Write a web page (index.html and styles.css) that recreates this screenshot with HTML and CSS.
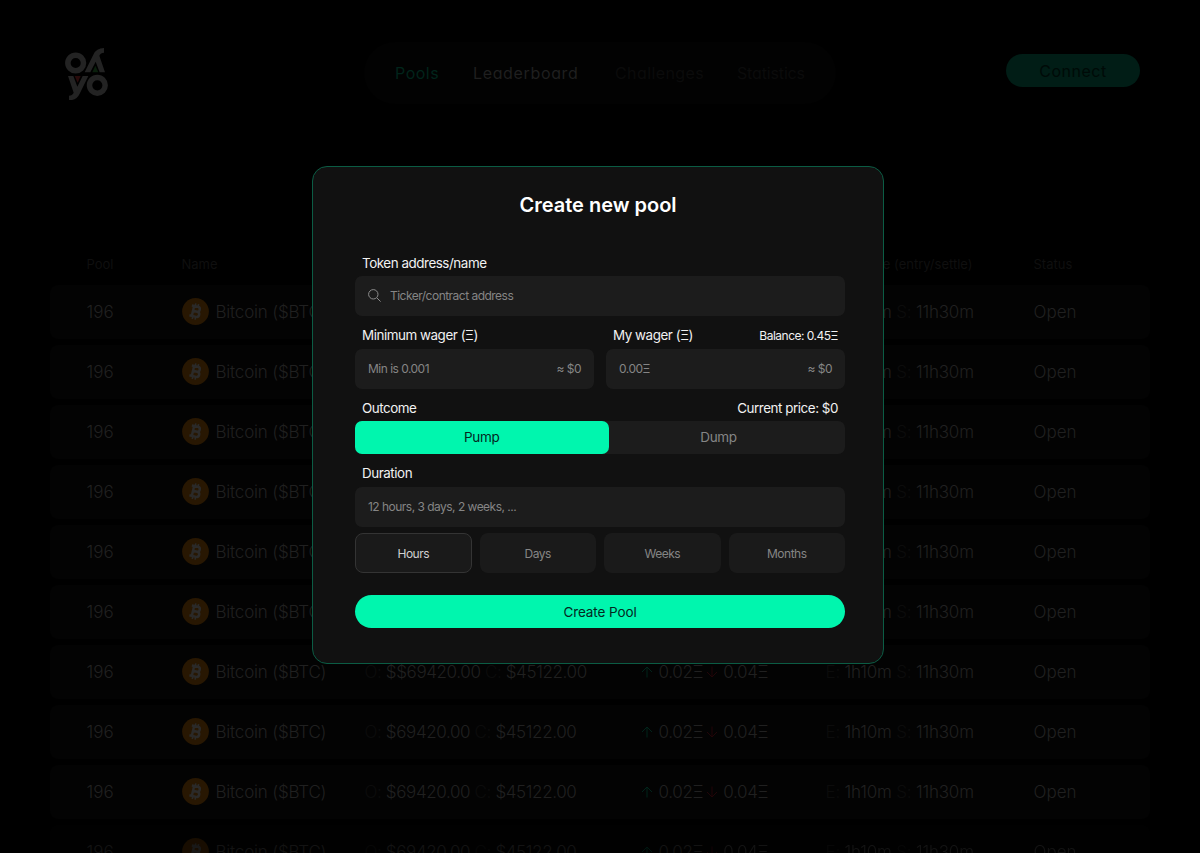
FILE: index.html
```html
<!DOCTYPE html>
<html lang="en">
<head>
<meta charset="utf-8">
<title>Pools</title>
<link rel="stylesheet" href="styles.css">
</head>
<body>
<svg class="defs" width="0" height="0" aria-hidden="true">
  <symbol id="btc" viewBox="0 0 27 27">
    <circle cx="13.5" cy="13.5" r="13.4" fill="#281702"/>
    <g transform="rotate(13 13.5 13.5)" fill="none" stroke="#2b2a29" stroke-width="2.5">
      <path d="M8.6 8.4h6.2a2.4 2.4 0 0 1 0 4.9h-3.4M10.9 13.4h4.3a2.6 2.6 0 0 1 0 5.2H8.4M10.9 8.4v10.2"/>
      <path stroke-width="1.6" d="M12 5.5v3M14.9 5.5v3M12 18.5v3M14.9 18.5v3"/>
    </g>
  </symbol>
  <symbol id="up" viewBox="0 0 12 12"><path d="M6 11.5V1M1 6l5-5 5 5" fill="none" stroke="#01241b"/></symbol>
  <symbol id="down" viewBox="0 0 12 12"><path d="M6 .5V11M1 6l5 5 5-5" fill="none" stroke="#220508"/></symbol>
</svg>
<div class="page">
  <header class="header">
    <svg class="logo" viewBox="75 53 129 157" aria-label="oyyo">
      <defs>
        <g id="half">
          <circle cx="107" cy="98" r="23.5" fill="none" stroke="#232323" stroke-width="16.5"/>
          <path d="M134 126L160 73Q169 53 192 53V67Q182 67 178 76L195 126H179L167 94L151 126Z" fill="#232323"/>
        </g>
      </defs>
      <use href="#half"/>
      <use href="#half" transform="rotate(180 139.5 131.5)"/>
      <path d="M166 106l9 20h-18z" fill="#0a1f0c"/>
      <path d="M113 157l-9-20h18z" fill="#290b0b"/>
    </svg>
    <nav class="nav">
      <a class="nav-item active">Pools</a>
      <a class="nav-item lead">Leaderboard</a>
      <a class="nav-item off chal">Challenges</a>
      <a class="nav-item off stat">Statistics</a>
    </nav>
    <button class="connect">Connect</button>
  </header>

  <main class="table">
    <div class="cols head"><span>Pool</span><span>Name</span><span>Price</span><span>Wager</span><span>Close time (entry/settle)</span><span>Status</span></div>
    <div class="cols row"><span>196</span><span class="name"><svg class="coin"><use href="#btc"/></svg>Bitcoin ($BTC)</span><span class="price"><i>O:</i> $69420.00 <i>C:</i> $45122.00</span><span class="wager"><svg class="arrow"><use href="#up"/></svg>0.02Ξ<svg class="arrow dn"><use href="#down"/></svg>0.04Ξ</span><span class="time"><i>E:</i> 1h10m <i>S:</i> 11h30m</span><span>Open</span></div>
    <div class="cols row"><span>196</span><span class="name"><svg class="coin"><use href="#btc"/></svg>Bitcoin ($BTC)</span><span class="price"><i>O:</i> $69420.00 <i>C:</i> $45122.00</span><span class="wager"><svg class="arrow"><use href="#up"/></svg>0.02Ξ<svg class="arrow dn"><use href="#down"/></svg>0.04Ξ</span><span class="time"><i>E:</i> 1h10m <i>S:</i> 11h30m</span><span>Open</span></div>
    <div class="cols row"><span>196</span><span class="name"><svg class="coin"><use href="#btc"/></svg>Bitcoin ($BTC)</span><span class="price"><i>O:</i> $69420.00 <i>C:</i> $45122.00</span><span class="wager"><svg class="arrow"><use href="#up"/></svg>0.02Ξ<svg class="arrow dn"><use href="#down"/></svg>0.04Ξ</span><span class="time"><i>E:</i> 1h10m <i>S:</i> 11h30m</span><span>Open</span></div>
    <div class="cols row"><span>196</span><span class="name"><svg class="coin"><use href="#btc"/></svg>Bitcoin ($BTC)</span><span class="price"><i>O:</i> $69420.00 <i>C:</i> $45122.00</span><span class="wager"><svg class="arrow"><use href="#up"/></svg>0.02Ξ<svg class="arrow dn"><use href="#down"/></svg>0.04Ξ</span><span class="time"><i>E:</i> 1h10m <i>S:</i> 11h30m</span><span>Open</span></div>
    <div class="cols row"><span>196</span><span class="name"><svg class="coin"><use href="#btc"/></svg>Bitcoin ($BTC)</span><span class="price"><i>O:</i> $69420.00 <i>C:</i> $45122.00</span><span class="wager"><svg class="arrow"><use href="#up"/></svg>0.02Ξ<svg class="arrow dn"><use href="#down"/></svg>0.04Ξ</span><span class="time"><i>E:</i> 1h10m <i>S:</i> 11h30m</span><span>Open</span></div>
    <div class="cols row"><span>196</span><span class="name"><svg class="coin"><use href="#btc"/></svg>Bitcoin ($BTC)</span><span class="price"><i>O:</i> $69420.00 <i>C:</i> $45122.00</span><span class="wager"><svg class="arrow"><use href="#up"/></svg>0.02Ξ<svg class="arrow dn"><use href="#down"/></svg>0.04Ξ</span><span class="time"><i>E:</i> 1h10m <i>S:</i> 11h30m</span><span>Open</span></div>
    <div class="cols row"><span>196</span><span class="name"><svg class="coin"><use href="#btc"/></svg>Bitcoin ($BTC)</span><span class="price"><i>O:</i> $$69420.00 <i>C:</i> $45122.00</span><span class="wager"><svg class="arrow"><use href="#up"/></svg>0.02Ξ<svg class="arrow dn"><use href="#down"/></svg>0.04Ξ</span><span class="time"><i>E:</i> 1h10m <i>S:</i> 11h30m</span><span>Open</span></div>
    <div class="cols row"><span>196</span><span class="name"><svg class="coin"><use href="#btc"/></svg>Bitcoin ($BTC)</span><span class="price"><i>O:</i> $69420.00 <i>C:</i> $45122.00</span><span class="wager"><svg class="arrow"><use href="#up"/></svg>0.02Ξ<svg class="arrow dn"><use href="#down"/></svg>0.04Ξ</span><span class="time"><i>E:</i> 1h10m <i>S:</i> 11h30m</span><span>Open</span></div>
    <div class="cols row"><span>196</span><span class="name"><svg class="coin"><use href="#btc"/></svg>Bitcoin ($BTC)</span><span class="price"><i>O:</i> $69420.00 <i>C:</i> $45122.00</span><span class="wager"><svg class="arrow"><use href="#up"/></svg>0.02Ξ<svg class="arrow dn"><use href="#down"/></svg>0.04Ξ</span><span class="time"><i>E:</i> 1h10m <i>S:</i> 11h30m</span><span>Open</span></div>
    <div class="cols row last"><span>196</span><span class="name"><svg class="coin"><use href="#btc"/></svg>Bitcoin ($BTC)</span><span class="price"><i>O:</i> $69420.00 <i>C:</i> $45122.00</span><span class="wager"><svg class="arrow"><use href="#up"/></svg>0.02Ξ<svg class="arrow dn"><use href="#down"/></svg>0.04Ξ</span><span class="time"><i>E:</i> 1h10m <i>S:</i> 11h30m</span><span>Open</span></div>
  </main>

  <section class="modal">
    <h1 class="title">Create new pool</h1>
    <form class="form">
      <div class="label first">Token address/name</div>
      <div class="field"><svg class="search" viewBox="0 0 13 13"><path d="M9 9l3.6 3.6M10 5.3a4.7 4.7 0 1 1-9.4 0 4.7 4.7 0 0 1 9.4 0z" fill="none" stroke="#8b8b8b"/></svg><span>Ticker/contract address</span></div>
      <div class="pair">
        <div>
          <div class="label">Minimum wager (Ξ)</div>
          <div class="field split"><span>Min is 0.001</span><span>≈ $0</span></div>
        </div>
        <div>
          <div class="label">My wager (Ξ)<span class="balance">Balance: 0.45Ξ</span></div>
          <div class="field split"><span>0.00Ξ</span><span>≈ $0</span></div>
        </div>
      </div>
      <div class="label">Outcome<span>Current price: $0</span></div>
      <div class="toggle"><div class="pump">Pump</div><div class="dump">Dump</div></div>
      <div class="label">Duration</div>
      <div class="field"><span>12 hours, 3 days, 2 weeks, ...</span></div>
      <div class="units"><div class="unit on">Hours</div><div class="unit">Days</div><div class="unit">Weeks</div><div class="unit">Months</div></div>
      <div class="submit">Create Pool</div>
    </form>
  </section>
</div>
</body>
</html>
```
FILE: styles.css
```css
* { box-sizing: border-box; }
body { margin: 0; background: #000; font-family: Inter, "Liberation Sans", sans-serif; }
.defs { position: absolute; }
.page { position: relative; width: 1200px; height: 853px; overflow: hidden; }

.header { display: flex; align-items: flex-start; height: 250px; padding: 42px 60px 0 65px; }
.logo { width: 43px; height: 52.3px; margin-top: 5.6px; }
.nav { display: flex; align-items: center; width: 472px; height: 62px; margin-left: 256px; padding: 0 31px; border-radius: 31px; background: #020202; font-size: 16px; font-feature-settings: "cv11"; }
.nav-item { width: 78px; color: #1f1f1f; letter-spacing: .5px; }
.nav-item.active { color: #01241b; }
.nav-item.lead { width: 142px; letter-spacing: .65px; }
.nav-item.off { color: #0b0b0b; }
.nav-item.chal { width: 122px; letter-spacing: .4px; }
.nav-item.stat { width: 68px; letter-spacing: -.15px; }
.connect { width: 134px; height: 33px; margin: 12px 0 0 170px; padding: 0; border: 0; border-radius: 17px; background: #011d16; color: #000a07; font: 16px Inter, "Liberation Sans", sans-serif; font-feature-settings: "cv11"; letter-spacing: .5px; }

.table { margin: 0 50px; }
.cols { display: grid; grid-template-columns: 95px 183px 276px 185px 208px 1fr; align-items: center; padding-left: 36.5px; white-space: pre; }
.head { height: 28px; margin-bottom: 7px; font-size: 13px; color: #0f0f0f; }
.row { height: 54px; margin-bottom: 6px; border-radius: 8px; background: #030303; color: #202020; font-size: 17px; font-weight: 300; }
.row i { font-style: normal; color: #0c0c0c; }
.row.last { opacity: .6; }
.name { display: flex; align-items: center; gap: 7px; letter-spacing: -.2px; }
.coin { width: 27px; height: 27px; margin-bottom: 1px; }
.price { letter-spacing: -.38px; }
.time { letter-spacing: -.2px; }
.wager { display: flex; align-items: center; letter-spacing: -.35px; }
.arrow { width: 12px; height: 12px; margin-right: 6px; }
.arrow.dn { margin: 0 5px 0 3px; }

.modal { position: absolute; left: 312px; top: 166px; width: 572px; height: 498px; border: 1px solid #0b5c44; border-radius: 15px; background: #111; color: #fff; }
.title { margin: 24px 0 0; font-size: 20px; line-height: 29px; font-weight: 600; text-align: center; }
.form { width: 490px; margin: 30px 0 0 42px; }
.label { display: flex; justify-content: space-between; align-items: center; height: 32.5px; padding: 6px 7px 0; font-size: 13.4px; letter-spacing: -.45px; color: #f2f2f2; }
.label.first { height: 26px; padding: 0 7px 1px; }
.label .balance { font-size: 12px; letter-spacing: -.5px; }
.field { display: flex; align-items: center; gap: 9px; height: 40px; padding: 0 13px 1px; border-radius: 7px; background: #1c1c1c; color: #858585; font-size: 12px; letter-spacing: -.52px; }
.split { justify-content: space-between; }
.search { width: 13px; height: 13px; }
.pair { display: grid; grid-template-columns: 1fr 1fr; gap: 12px; }
.toggle { display: flex; height: 33px; border-radius: 7px; background: #1c1c1c; font-size: 13.5px; line-height: 33px; letter-spacing: -.35px; text-align: center; }
.pump { width: 253.5px; border-radius: 7px; background: #00f6ae; color: #04281e; }
.dump { width: 220px; color: #858585; }
.units { display: grid; grid-template-columns: repeat(4, 1fr); gap: 8px; margin-top: 6.5px; }
.unit { height: 40px; border-radius: 8px; background: #1a1a1a; color: #858585; font-size: 12px; line-height: 41px; letter-spacing: -.5px; text-align: center; }
.unit.on { border: 1px solid #343434; line-height: 39px; color: #d0d0d0; }
.submit { height: 33px; margin-top: 22px; border-radius: 17px; background: #00f6ae; color: #04281e; font-size: 13.5px; line-height: 34px; letter-spacing: -.1px; text-align: center; }
```
